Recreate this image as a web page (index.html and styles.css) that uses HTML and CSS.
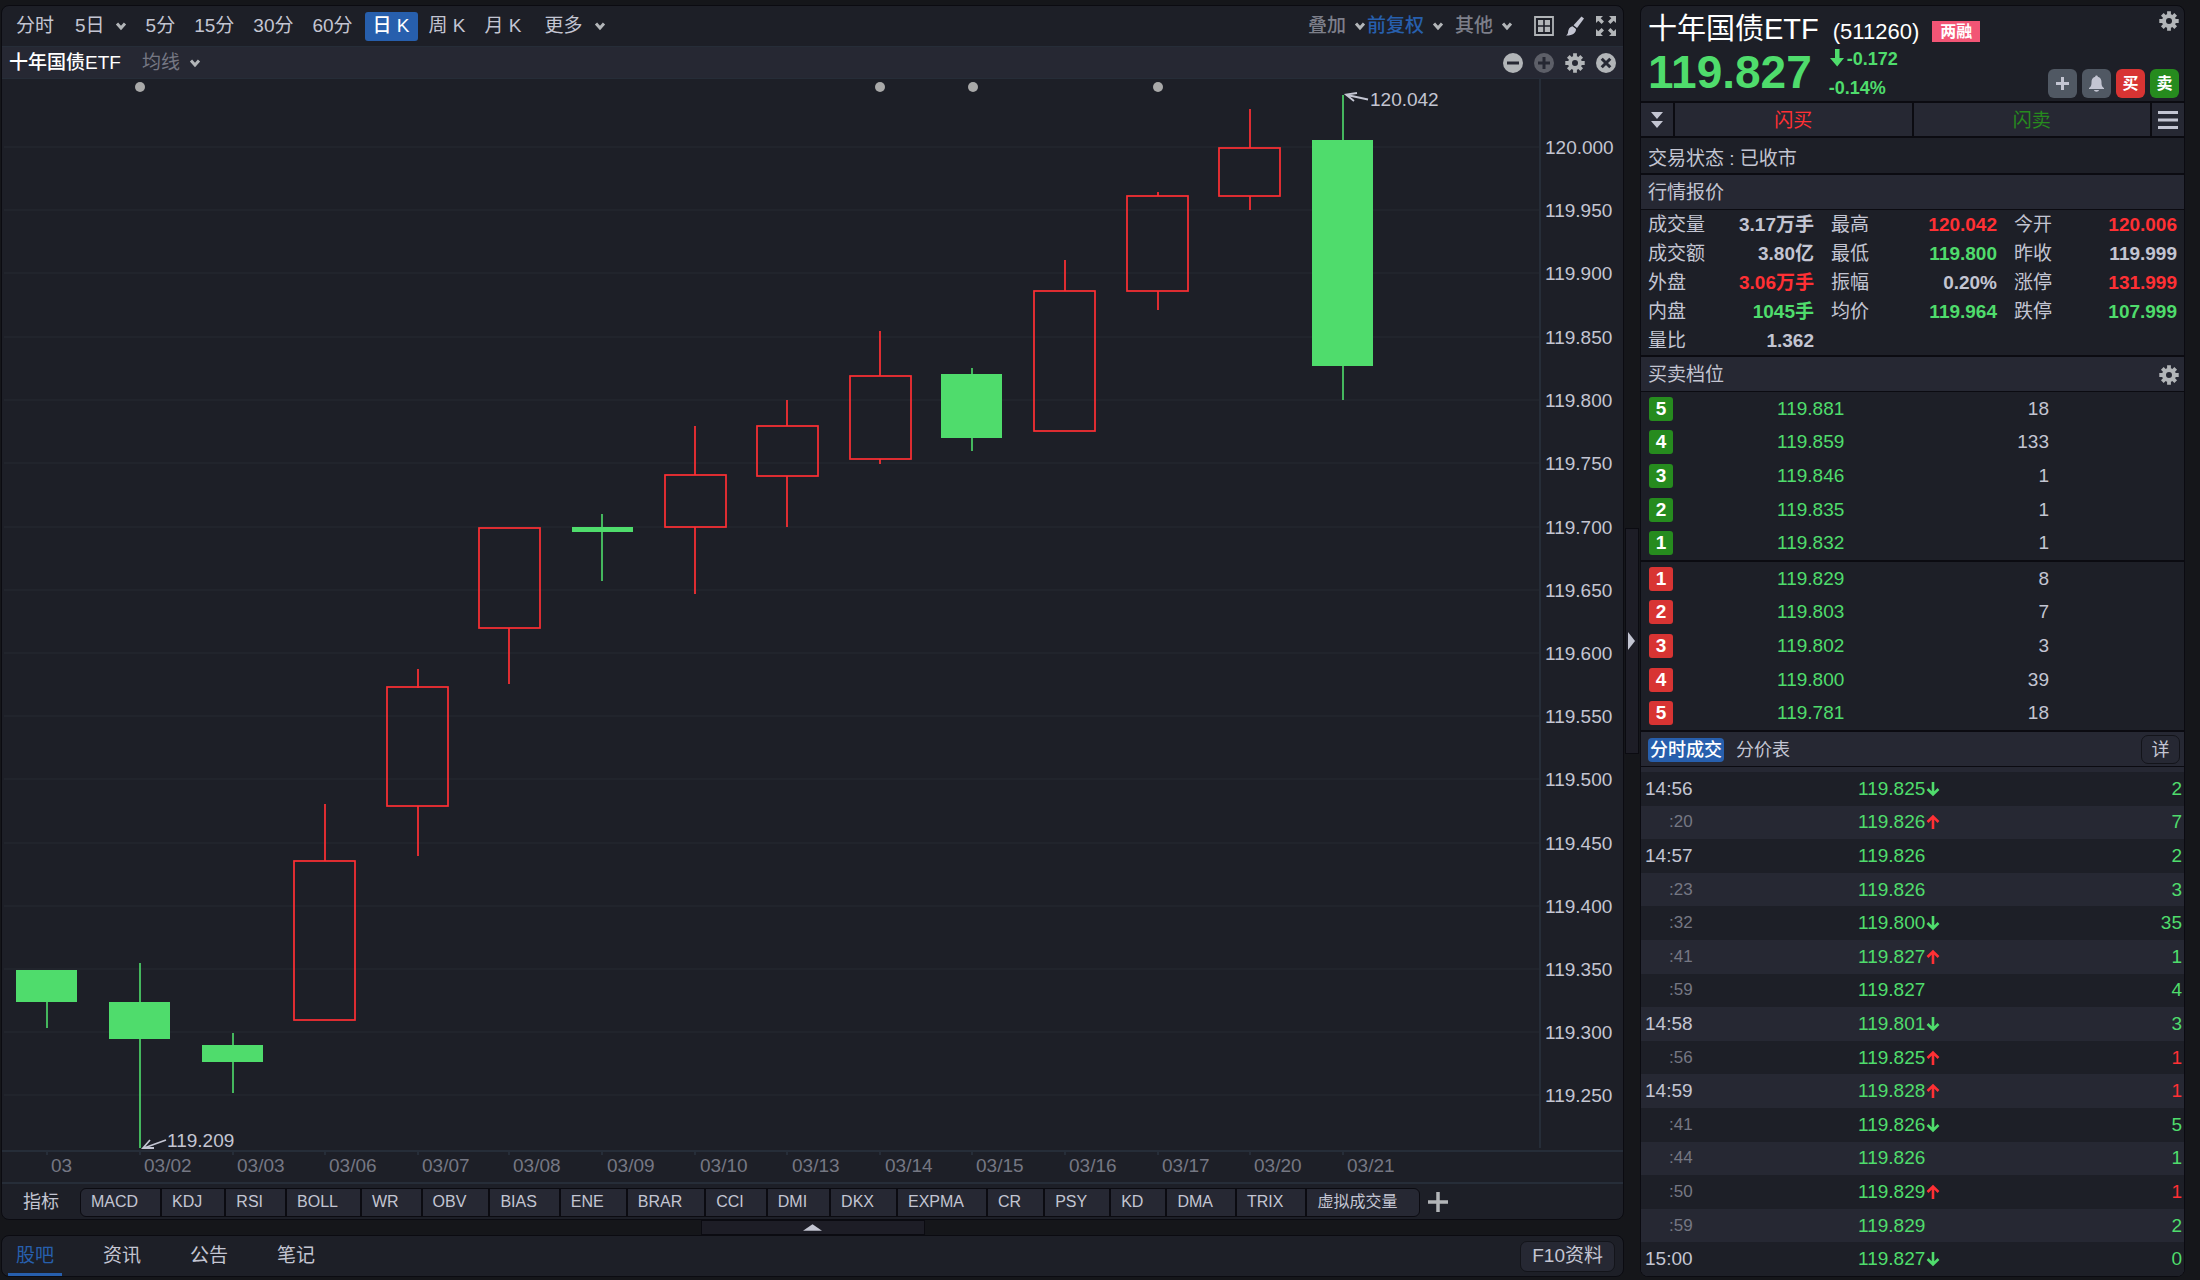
FILE: index.html
```html
<!DOCTYPE html>
<html lang="zh-CN">
<head>
<meta charset="utf-8">
<title>十年国债ETF (511260)</title>
<link rel="stylesheet" href="styles.css">
</head>
<body>
<svg class="sprite" aria-hidden="true">
  <symbol id="chevron" viewBox="0 0 12 10"><path d="M2 2.5 6 7 10 2.5" fill="none" stroke="currentColor" stroke-width="3"/></symbol>
  <symbol id="gear" viewBox="0 0 20 20">
    <circle cx="10" cy="10" r="5" fill="none" stroke="currentColor" stroke-width="4"/>
    <path d="M10 .3V4M10 16v3.7M.3 10H4M16 10h3.7M3.3 3.3 5.8 5.8M14.2 14.2l2.5 2.5M3.3 16.7l2.5-2.5M14.2 5.8l2.5-2.5" stroke="currentColor" stroke-width="3.8"/>
  </symbol>
  <symbol id="down" viewBox="0 0 14 16"><path d="M7 1v13M1.5 8 7 13.5 12.5 8" fill="none" stroke="currentColor" stroke-width="2.6"/></symbol>
  <symbol id="up" viewBox="0 0 14 16"><path d="M7 15V2M1.5 8 7 2.5 12.5 8" fill="none" stroke="currentColor" stroke-width="2.6"/></symbol>
</svg>
<div class="app">
  <main class="main">
    <section class="panel">
      <nav class="toolbar">
        <button class="period">分时</button>
        <button class="period days">5日<svg class="chev"><use href="#chevron"/></svg></button>
        <button class="period">5分</button>
        <button class="period">15分</button>
        <button class="period">30分</button>
        <button class="period">60分</button>
        <button class="period active">日 K</button>
        <button class="period">周 K</button>
        <button class="period">月 K</button>
        <button class="period more">更多<svg class="chev"><use href="#chevron"/></svg></button>
        <div class="tools">
          <button class="tool overlay">叠加<svg class="chev"><use href="#chevron"/></svg></button>
          <button class="tool adjust"><span>前复权</span><svg class="chev"><use href="#chevron"/></svg></button>
          <button class="tool other">其他<svg class="chev"><use href="#chevron"/></svg></button>
          <button class="icon" aria-label="布局"><svg viewBox="0 0 20 20"><path d="M1 1h18v18H1z" fill="none" stroke="#b2b5b8" stroke-width="1.8"/><path d="M4 4h5.2v5.2H4zM10.8 4H16v5.2h-5.2zM4 10.8h5.2V16H4zM10.8 10.8H16V16h-5.2z" fill="#b2b5b8"/></svg></button>
          <button class="icon" aria-label="画线"><svg viewBox="0 0 20 20"><path d="M16.5.5 19 2.5 12 12 8.5 9.2z" fill="#c3c5d2"/><path d="M7.5 10.2 11 13c0 4-3.5 6.700-10 6.500 2.500-1.500 1.800-3.200 2.500-5.500.7-2.300 2.200-3.400 4-3.800z" fill="#c3c5d2"/></svg></button>
          <button class="icon" aria-label="全屏"><svg viewBox="0 0 20 20"><g fill="#b2b5b8"><path d="M0 0h7L4.700 2.300 8 5.600 5.600 8 2.300 4.700 0 7z"/><path d="M20 0v7l-2.300-2.300L14.400 8 12 5.600l3.300-3.300L13 0z"/><path d="M0 20v-7l2.300 2.300L5.600 12 8 14.400l-3.300 3.300L7 20z"/><path d="M20 20h-7l2.300-2.300-3.300-3.300 2.400-2.400 3.300 3.300L20 13z"/></g></svg></button>
        </div>
      </nav>
      <div class="subbar">
        <h2 class="sub-name">十年国债ETF</h2>
        <button class="ma">均线<svg class="chev"><use href="#chevron"/></svg></button>
        <div class="sub-icons">
          <button class="icon" aria-label="缩小"><svg viewBox="0 0 20 20"><circle cx="10" cy="10" r="10" fill="#b2b5b8"/><path d="M4 10h12" stroke="#262833" stroke-width="3"/></svg></button>
          <button class="icon" aria-label="放大" disabled><svg viewBox="0 0 20 20"><circle cx="10" cy="10" r="10" fill="#5d5f68"/><path d="M4 10h12M10 4v12" stroke="#262833" stroke-width="3"/></svg></button>
          <button class="icon" aria-label="设置"><svg><use href="#gear"/></svg></button>
          <button class="icon" aria-label="关闭"><svg viewBox="0 0 20 20"><circle cx="10" cy="10" r="10" fill="#b2b5b8"/><path d="m5.700 5.700 8.600 8.600M14.300 5.700l-8.600 8.600" stroke="#262833" stroke-width="3"/></svg></button>
        </div>
      </div>
      <svg class="chart" viewBox="2 79 1621 1103" role="img" aria-label="日K线图">
        <path class="grid" d="M4 147H1539M4 210H1539M4 273H1539M4 337H1539M4 400H1539M4 463H1539M4 527H1539M4 590H1539M4 653H1539M4 716H1539M4 779H1539M4 843H1539M4 906H1539M4 969H1539M4 1032H1539M4 1095H1539"/>
        <path class="axis" d="M1540 79V1148M2 1151H1623M47 1151v4M140 1151v4M233 1151v4M325 1151v4M418 1151v4M509 1151v4M602 1151v4M695 1151v4M787 1151v4M880 1151v4M972 1151v4M1065 1151v4M1158 1151v4M1250 1151v4M1343 1151v4"/>
        <g class="dots"><circle cx="140" cy="87" r="5"/><circle cx="880" cy="87" r="5"/><circle cx="973" cy="87" r="5"/><circle cx="1158" cy="87" r="5"/></g>
        <g class="down-candles">
          <path d="M47 1002V1028M140 963V1148M233 1033V1093M602 514V581M972 368V451M1343 95V400"/>
          <rect x="16" y="970" width="61" height="32"/><rect x="109" y="1002" width="61" height="37"/><rect x="202" y="1045" width="61" height="17"/><rect x="572" y="527" width="61" height="5"/><rect x="941" y="374" width="61" height="64"/><rect x="1312" y="140" width="61" height="226"/>
        </g>
        <g class="up-candles">
          <path d="M325 804V861M418 669V688M418 806V856M509 628V684M695 426V475M695 527V594M787 400V426M787 476V527M880 331V376M880 459V464M1065 260V291M1158 192V196M1158 291V310M1250 109V148M1250 196V210"/>
          <rect x="294" y="861" width="61" height="159"/><rect x="387" y="687" width="61" height="119"/><rect x="479" y="528" width="61" height="100"/><rect x="665" y="475" width="61" height="52"/><rect x="757" y="426" width="61" height="50"/><rect x="850" y="376" width="61" height="83"/><rect x="1034" y="291" width="61" height="140"/><rect x="1127" y="196" width="61" height="95"/><rect x="1219" y="148" width="61" height="48"/>
        </g>
        <path class="marks" d="M1368 99.500 1347 95M1357 93 1346 94.500 1354 101M166 1140 144 1148M150 1140 143 1148 154 1148"/>
        <g class="mark-text"><text x="1370" y="106">120.042</text><text x="167" y="1147">119.209</text></g>
        <g class="prices">
          <text x="1545" y="154">120.000</text><text x="1545" y="217">119.950</text><text x="1545" y="280">119.900</text><text x="1545" y="344">119.850</text><text x="1545" y="407">119.800</text><text x="1545" y="470">119.750</text><text x="1545" y="534">119.700</text><text x="1545" y="597">119.650</text><text x="1545" y="660">119.600</text><text x="1545" y="723">119.550</text><text x="1545" y="786">119.500</text><text x="1545" y="850">119.450</text><text x="1545" y="913">119.400</text><text x="1545" y="976">119.350</text><text x="1545" y="1039">119.300</text><text x="1545" y="1102">119.250</text>
        </g>
        <g class="dates">
          <text x="51" y="1172">03</text><text x="144" y="1172">03/02</text><text x="237" y="1172">03/03</text><text x="329" y="1172">03/06</text><text x="422" y="1172">03/07</text><text x="513" y="1172">03/08</text><text x="607" y="1172">03/09</text><text x="700" y="1172">03/10</text><text x="792" y="1172">03/13</text><text x="885" y="1172">03/14</text><text x="976" y="1172">03/15</text><text x="1069" y="1172">03/16</text><text x="1162" y="1172">03/17</text><text x="1254" y="1172">03/20</text><text x="1347" y="1172">03/21</text>
        </g>
      </svg>
      <div class="indicators">
        <span class="ind-label">指标</span>
        <div class="chips">
          <button>MACD</button><button>KDJ</button><button>RSI</button><button>BOLL</button><button>WR</button><button>OBV</button><button>BIAS</button><button>ENE</button><button>BRAR</button><button>CCI</button><button>DMI</button><button>DKX</button><button>EXPMA</button><button>CR</button><button>PSY</button><button>KD</button><button>DMA</button><button>TRIX</button><button>虚拟成交量</button>
        </div>
        <button class="icon add" aria-label="添加指标"><svg viewBox="0 0 20 20"><path d="M0 10h20M10 0v20" stroke="#b2b5b8" stroke-width="3.500"/></svg></button>
      </div>
    </section>
    <div class="gutter"><button class="pull-up" aria-label="展开"><svg viewBox="0 0 20 7"><path d="M10 0 20 7H0z" fill="#c3c5d2"/></svg></button></div>
    <section class="panel bottom">
      <nav class="tabs"><a class="current" href="#guba">股吧</a><a href="#news">资讯</a><a href="#notice">公告</a><a href="#notes">笔记</a></nav>
      <button class="f10">F10资料</button>
    </section>
  </main>
  <div class="splitter"><button class="pull-right" aria-label="收起"><svg viewBox="0 0 8 18"><path d="M0 0 7 9 0 18z" fill="#c3c5d2"/></svg></button></div>
  <aside class="panel side">
    <header class="quote-head">
      <div class="title">
        <h1>十年国债ETF</h1><span class="code">(511260)</span><span class="tag">两融</span>
        <button class="icon" aria-label="设置"><svg><use href="#gear"/></svg></button>
      </div>
      <div class="last">
        <strong class="last-price">119.827</strong>
        <div class="change">
          <span><svg viewBox="0 0 14 18"><path d="M5 0h4.500v9H14l-6.800 8.500L0 9h5z" fill="currentColor"/></svg>-0.172</span>
          <span>-0.14%</span>
        </div>
        <div class="actions">
          <button aria-label="加自选"><svg viewBox="0 0 29 29"><path d="M8 14.500h13M14.500 8v13" stroke="#c3c5d2" stroke-width="3"/></svg></button>
          <button aria-label="提醒"><svg viewBox="0 0 29 29"><path d="M14.500 6.500c1 0 1.300.6 1.300 1.300 2.700.6 3.700 2.700 3.700 5.200 0 3.500.5 4.500 2.500 6.200v.8H7v-.8c2-1.700 2.500-2.700 2.500-6.200 0-2.500 1-4.600 3.700-5.200 0-.7.3-1.300 1.300-1.300zM12 21h5c-.2 1-1.200 1.700-2.500 1.700S12.200 22 12 21z" fill="#c3c5d2"/></svg></button>
          <button class="buy">买</button>
          <button class="sell">卖</button>
        </div>
      </div>
    </header>
    <div class="flash">
      <button aria-label="展开"><svg class="double" viewBox="0 0 12 16"><path d="M0 0h12L6 7zM0 9h12l-6 7z" fill="#c3c5d2"/></svg></button>
      <button class="flash-buy">闪买</button>
      <button class="flash-sell">闪卖</button>
      <button aria-label="菜单"><svg class="burger" viewBox="0 0 20 18"><path d="M0 1.500h20M0 9h20M0 16.500h20" stroke="#c3c5d2" stroke-width="3"/></svg></button>
    </div>
    <p class="state">交易状态 : 已收市</p>
    <h3 class="section">行情报价</h3>
    <table class="quotes">
      <tr><th>成交量</th><td>3.17万手</td><th>最高</th><td class="red">120.042</td><th>今开</th><td class="red">120.006</td></tr>
      <tr><th>成交额</th><td>3.80亿</td><th>最低</th><td class="green">119.800</td><th>昨收</th><td>119.999</td></tr>
      <tr><th>外盘</th><td class="red">3.06万手</td><th>振幅</th><td>0.20%</td><th>涨停</th><td class="red">131.999</td></tr>
      <tr><th>内盘</th><td class="green">1045手</td><th>均价</th><td class="green">119.964</td><th>跌停</th><td class="green">107.999</td></tr>
      <tr><th>量比</th><td>1.362</td><td colspan="4"></td></tr>
    </table>
    <h3 class="section">买卖档位<button class="icon" aria-label="设置"><svg><use href="#gear"/></svg></button></h3>
    <table class="depth asks">
      <tr><th><b>5</b></th><td>119.881</td><td>18</td></tr>
      <tr><th><b>4</b></th><td>119.859</td><td>133</td></tr>
      <tr><th><b>3</b></th><td>119.846</td><td>1</td></tr>
      <tr><th><b>2</b></th><td>119.835</td><td>1</td></tr>
      <tr><th><b>1</b></th><td>119.832</td><td>1</td></tr>
    </table>
    <table class="depth bids">
      <tr><th><b>1</b></th><td>119.829</td><td>8</td></tr>
      <tr><th><b>2</b></th><td>119.803</td><td>7</td></tr>
      <tr><th><b>3</b></th><td>119.802</td><td>3</td></tr>
      <tr><th><b>4</b></th><td>119.800</td><td>39</td></tr>
      <tr><th><b>5</b></th><td>119.781</td><td>18</td></tr>
    </table>
    <div class="section trade-head">
      <button class="trade-tab on">分时成交</button><button class="trade-tab">分价表</button><button class="detail">详</button>
    </div>
    <div class="trades">
      <table>
        <tr><th>14:56</th><td>119.825<svg><use href="#down"/></svg></td><td>2</td></tr>
        <tr><th class="sec">:20</th><td>119.826<svg class="red"><use href="#up"/></svg></td><td>7</td></tr>
        <tr><th>14:57</th><td>119.826</td><td>2</td></tr>
        <tr><th class="sec">:23</th><td>119.826</td><td>3</td></tr>
        <tr><th class="sec">:32</th><td>119.800<svg><use href="#down"/></svg></td><td>35</td></tr>
        <tr><th class="sec">:41</th><td>119.827<svg class="red"><use href="#up"/></svg></td><td>1</td></tr>
        <tr><th class="sec">:59</th><td>119.827</td><td>4</td></tr>
        <tr><th>14:58</th><td>119.801<svg><use href="#down"/></svg></td><td>3</td></tr>
        <tr><th class="sec">:56</th><td>119.825<svg class="red"><use href="#up"/></svg></td><td class="red">1</td></tr>
        <tr><th>14:59</th><td>119.828<svg class="red"><use href="#up"/></svg></td><td class="red">1</td></tr>
        <tr><th class="sec">:41</th><td>119.826<svg><use href="#down"/></svg></td><td>5</td></tr>
        <tr><th class="sec">:44</th><td>119.826</td><td>1</td></tr>
        <tr><th class="sec">:50</th><td>119.829<svg class="red"><use href="#up"/></svg></td><td class="red">1</td></tr>
        <tr><th class="sec">:59</th><td>119.829</td><td>2</td></tr>
        <tr><th>15:00</th><td>119.827<svg><use href="#down"/></svg></td><td>0</td></tr>
      </table>
    </div>
  </aside>
</div>
</body>
</html>
```

FILE: styles.css
```css
:root {
  --page: #15161a;
  --panel: #1d1f27;
  --raised: #262833;
  --edge: #0b0b11;
  --line: #262d38;
  --text: #c3c5d2;
  --muted: #757783;
  --blue: #275fad;
  --green: #4fdc6c;
  --red: #ff3034;
}
* { box-sizing: border-box; }
body {
  margin: 0;
  background: var(--page);
  color: var(--text);
  font: 19px/24px "Liberation Sans", "Noto Sans CJK SC", sans-serif;
}
h1, h2, h3, p { margin: 0; font-weight: 400; }
button {
  margin: 0;
  padding: 0;
  border: 0;
  background: none;
  color: inherit;
  font: inherit;
  cursor: pointer;
}
table { width: 100%; border-collapse: separate; border-spacing: 0; table-layout: fixed; }
th, td { padding: 0; font-weight: 400; text-align: left; }
.sprite { position: absolute; width: 0; height: 0; }
.red { color: var(--red); }
.green { color: var(--green); }

.app {
  display: grid;
  grid-template-columns: minmax(0, 1fr) 16px 545px;
  min-height: 100vh;
  padding: 5px 15px 3px 1px;
}
.main { display: flex; flex-direction: column; }
.panel {
  border: 1px solid var(--edge);
  border-radius: 8px;
  background: var(--panel);
  overflow: hidden;
}

/* toolbars */
.toolbar, .subbar {
  display: flex;
  align-items: center;
  border-bottom: 1px solid var(--line);
  white-space: nowrap;
}
.toolbar { gap: 3px; height: 41px; padding: 0 7px 0 6px; }
.subbar { height: 32px; padding: 1px 7px 0; background: var(--raised); }
.period { height: 29px; padding: 0 8px; border-radius: 3px; }
.period .chev { margin-left: 12px; }
.days { margin-left: 2px; }
.days .chev { margin-left: 10px; }
.active { margin-left: 1px; background: var(--blue); color: #fff; font-weight: 500; }
.more { margin-left: 4px; }
.chev { width: 12px; height: 10px; color: #b2b5b8; vertical-align: 1px; }
.tools, .sub-icons { display: flex; align-items: center; gap: 11px; margin-left: auto; }
.tool { color: #7d7f8a; font-weight: 500; }
.tool .chev { margin-left: 8px; }
.overlay { margin-right: -10px; }
.adjust span { color: var(--blue); }
.other { margin-right: 10px; }
.icon { display: flex; color: #b2b5b8; }
.icon svg { width: 20px; height: 20px; }
.sub-name { color: #fff; font-size: 19px; font-weight: 500; }
.ma { margin-left: 21px; color: var(--muted); }
.ma .chev { margin-left: 9px; }

/* candlestick chart */
.chart { display: block; width: 100%; height: auto; }
.chart path { fill: none; stroke-width: 2; }
.grid { stroke: #21242c; }
.axis { stroke: var(--line); }
.dots { fill: #a9a9a9; }
.down-candles { fill: var(--green); }
.down-candles path { stroke: var(--green); stroke-width: 1.6; }
.up-candles { fill: none; stroke: var(--red); stroke-width: 1.7; }
.up-candles path { stroke-width: 1.7; }
.chart .marks { stroke: var(--text); stroke-width: 1.8; }
.mark-text, .prices { fill: var(--text); }
.dates { fill: var(--muted); }

/* indicator strip */
.indicators {
  display: flex;
  align-items: center;
  height: 37px;
  padding: 1px 0 0 21px;
  border-top: 2px solid var(--line);
  white-space: nowrap;
}
.ind-label { width: 57px; font-size: 18px; }
.chips {
  display: flex;
  height: 29px;
  border: 1px solid var(--edge);
  border-radius: 6px;
  overflow: hidden;
  font-size: 16px;
  background: var(--raised);
}
.chips button { padding: 0 22px 0 10px; border-right: 2px solid var(--edge); }
.chips button:last-child { border-right: 0; }
.add { margin-left: 8px; }

.gutter { display: flex; justify-content: center; height: 15px; }
.pull-up {
  display: flex;
  align-items: center;
  justify-content: center;
  width: 224px;
  border: 1px solid var(--edge);
  background: #1d1d26;
}
.pull-up svg { width: 19px; height: 7px; }

.bottom {
  display: flex;
  flex: 1;
  align-items: center;
  justify-content: space-between;
  min-height: 42px;
  padding: 0 8px 0 6px;
}
.tabs { display: flex; gap: 33px; align-self: stretch; }
.tabs a {
  padding: 8px 8px 0;
  border-bottom: 3px solid transparent;
  color: var(--text);
  text-decoration: none;
}
.tabs .current { border-color: var(--blue); color: var(--blue); }
.f10, .detail {
  border: 1px solid #13141a;
  border-radius: 7px;
  background: var(--raised);
}
.f10 { height: 31px; padding: 0 11px; }

.splitter { display: flex; align-items: center; padding: 0 1px; }
.pull-right {
  display: flex;
  align-items: center;
  width: 14px;
  height: 226px;
  padding-left: 2px;
  border: 1px solid var(--edge);
  background: #1d1d26;
}
.pull-right svg { width: 8px; height: 18px; }

/* quote column */
.side { display: flex; flex-direction: column; }
.quote-head { height: 97px; padding: 3px 5px 0 7px; border-bottom: 2px solid var(--edge); }
.title { display: flex; align-items: baseline; height: 38px; color: #fff; }
h1 { font-size: 29px; line-height: 40px; }
.code { margin-left: 14px; font-size: 22px; }
.tag {
  align-self: center;
  margin: 6px 0 0 13px;
  padding: 0 8px;
  background: #f25575;
  font-size: 16px;
  font-weight: 700;
  line-height: 21px;
}
.title .icon { align-self: flex-start; margin: 2px 0 0 auto; }
.last { display: flex; color: var(--green); font-weight: 700; }
.last-price { font-size: 46px; line-height: 50px; }
.change { display: flex; flex-direction: column; gap: 5px; margin-left: 17px; font-size: 18px; }
.change svg { width: 14px; height: 18px; margin: 0 3px -2px 1px; }
.actions { display: flex; gap: 5px; margin: 22px 0 0 auto; }
.actions button {
  display: flex;
  align-items: center;
  justify-content: center;
  width: 29px;
  height: 29px;
  border-radius: 6px;
  background: #505863;
  color: #fff;
  font-size: 16px;
}
.actions .buy { background: #d83433; }
.actions .sell { background: #268b1e; }

.flash {
  display: grid;
  grid-template-columns: 32px 1fr 1fr 32px;
  gap: 2px;
  height: 35px;
  border-bottom: 2px solid var(--edge);
  background: var(--edge);
}
.flash button { display: flex; align-items: center; justify-content: center; background: var(--raised); }
.double { width: 12px; height: 16px; }
.burger { width: 20px; height: 18px; }
.flash .flash-buy { padding-top: 2px; color: var(--red); }
.flash .flash-sell { padding-top: 2px; color: #268b1e; }

.state { height: 37px; padding: 9px 7px 0; border-bottom: 2px solid var(--edge); }
.section {
  display: flex;
  align-items: center;
  height: 35px;
  padding: 2px 5px 0 7px;
  border-bottom: 1px solid var(--edge);
  background: var(--raised);
  font-size: 19px;
}
.section .icon { margin-left: auto; }

.quotes {
  border: solid transparent;
  border-width: 0 7px;
  box-shadow: 0 2px 0 var(--edge);
  margin-bottom: 2px;
}
.quotes tr { height: 29px; }
.quotes th { width: 70px; }
.quotes td { padding-right: 17px; font-weight: 700; text-align: right; }
.quotes td:last-child { width: 93px; padding-right: 0; }

.depth { height: 170px; border-bottom: 2px solid var(--edge); }
.depth th { width: 136px; padding-left: 8px; }
.depth b {
  display: block;
  width: 24px;
  border-radius: 3px;
  background: #268b1e;
  color: #fff;
  text-align: center;
}
.bids b { background: #d83433; }
.depth td { color: var(--green); }
.depth td:last-child { padding-right: 135px; color: var(--text); text-align: right; }

.trade-head { padding: 1px 4px 0 7px; font-size: 18px; }
.trade-tab { padding: 0 2px; border-radius: 4px; }
.trade-tab + .trade-tab { margin-left: 10px; }
.on { background: var(--blue); color: #fff; font-weight: 500; }
.detail { width: 39px; height: 29px; margin-left: auto; }
.trades { flex: 1; padding-top: 5px; background: var(--raised); }
.trades table { height: 100%; }
.trades tr:nth-child(odd) { background: var(--panel); }
.trades th { width: 217px; padding-left: 4px; }
.trades .sec { padding-left: 28px; color: var(--muted); font-size: 17px; }
.trades td { color: var(--green); }
.trades td.red { color: var(--red); }
.trades td:last-child { padding-right: 2px; text-align: right; }
.trades svg { width: 14px; height: 16px; margin: 0 0 -2px 1px; }
```
